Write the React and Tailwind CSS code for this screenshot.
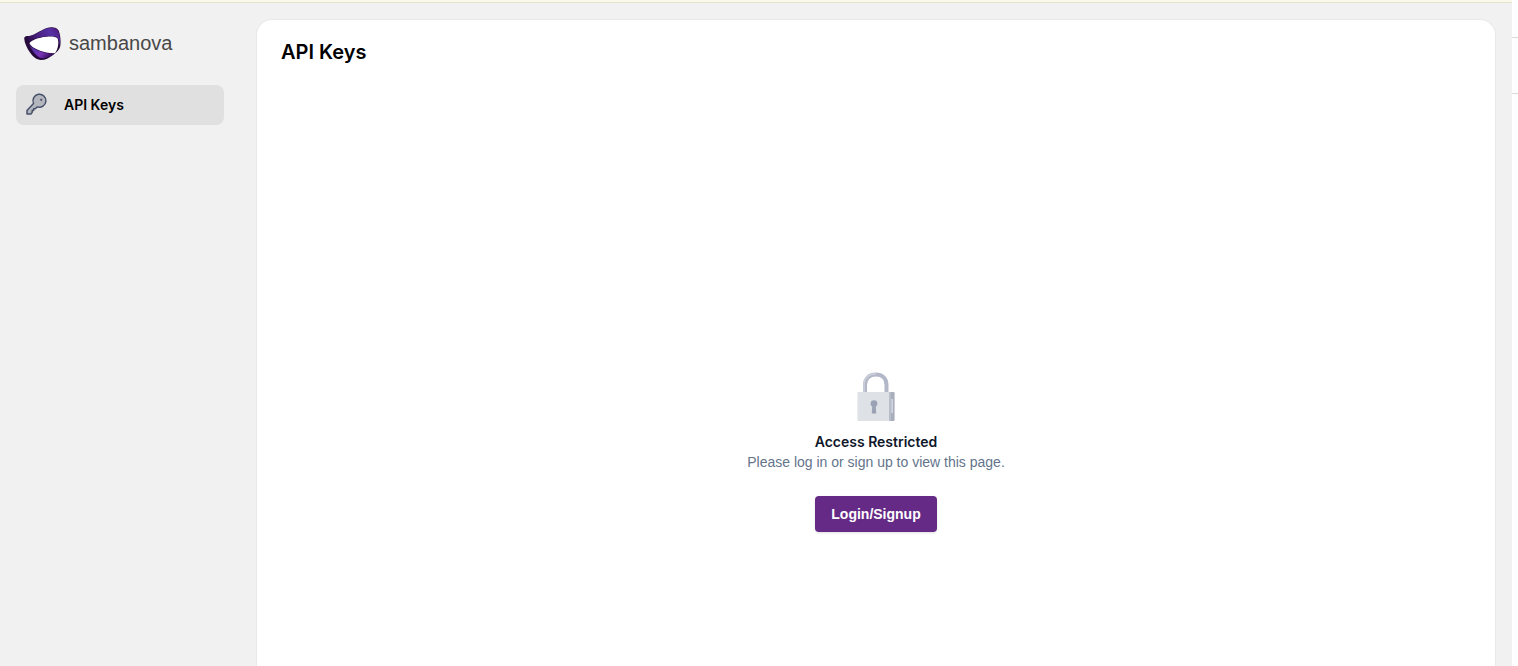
function LogoMark() {
  return (
    <svg viewBox="0 0 37 34" className="w-[37px] h-[34px] shrink-0" aria-hidden="true">
      <defs>
        <linearGradient id="ringTop" x1="0" y1="0.7" x2="1" y2="0.2">
          <stop offset="0" stopColor="#2a0a45" />
          <stop offset="0.4" stopColor="#4b2285" />
          <stop offset="0.75" stopColor="#5531a5" />
          <stop offset="1" stopColor="#521c80" />
        </linearGradient>
        <linearGradient id="ringBottom" x1="0" y1="0" x2="1" y2="0.5">
          <stop offset="0" stopColor="#4a2080" />
          <stop offset="0.35" stopColor="#5d35b0" />
          <stop offset="0.65" stopColor="#7a35b8" />
          <stop offset="1" stopColor="#3a1060" />
        </linearGradient>
      </defs>
      <path
        fill="#260a3c"
        d="M0.2 11.5C0.2 9.5 2 9 4.5 9C10 8.4 16 3.6 22 1.2C27 -0.5 32.5 -0.3 34.6 3.5C36.6 8 37 15 36.2 19.5C35.6 22.6 32.5 25.4 29 28C25 31 21.5 33 17 33C12.5 33 9 30 6 25.6C3 21.3 0.4 16 0.2 11.5Z"
      />
      <path
        fill="#fff"
        d="M5.4 16.2C6.6 19.2 10.4 21.4 15 23.3C20 25.3 26.5 26.7 31 26.3C34.2 22 35 15.5 33.6 11.6C31.5 9.3 27 9.3 22 9.8C14.5 10.6 7.5 13 5.4 16.2Z"
      />
      <path
        fill="url(#ringTop)"
        d="M3 9.7C10 9.3 16 4.4 22 1.8C27 0.1 32 0.2 34 3.8C35.8 7.6 36.5 14 35.6 19C35.7 15 34.8 11.2 32.5 9.8C29.5 8.8 26 9 21.5 9.5C14.5 10.2 8.5 11.9 5.4 14.6C4.2 13.4 3.2 11.5 3 9.7Z"
      />
      <path
        fill="url(#ringBottom)"
        d="M5 17.2C7.6 20.4 11 22.2 15.5 24C20.5 26 26.5 27.2 30.6 26.6C26.5 29.6 22 31.6 17.5 31.2C12.5 29.6 7.8 23.5 5 17.2Z"
      />
    </svg>
  )
}

function KeyIcon() {
  return (
    <svg viewBox="0 0 24 24" className="w-6 h-6 shrink-0" aria-hidden="true">
      <path
        fill="#b3b6bd"
        stroke="#47506a"
        strokeWidth="1.5"
        strokeLinejoin="round"
        d="M9.5 10.4A6.5 6.5 0 1 1 13.3 13.9L11.2 15.8H9.6V17.6H8.2V19.4L6.9 21H3V17.4Z"
      />
      <circle cx="17.2" cy="6.8" r="1.1" fill="#47506a" />
    </svg>
  )
}

function LockIcon() {
  return (
    <svg viewBox="0 0 38 50" className="w-[38px] h-[50px]" aria-hidden="true">
      <path fill="none" stroke="#b3b8c9" strokeWidth="4" d="M8 21V13C8 6.4 12.6 2.5 18.8 2.5S29.5 6.4 29.5 13V21" />
      <path fill="none" stroke="#cdd1db" strokeWidth="1.5" d="M7 21V13C7 6 12 1.7 18.8 1.7" />
      <path fill="#a9aebd" d="M32 20H36.4Q37.6 20 37.6 21.2V47.8Q37.6 49 36.4 49H32Z" />
      <path fill="#dee1e6" d="M1.6 20H32.6V49H1.6Q0.4 49 0.4 47.8V21.2Q0.4 20 1.6 20Z" />
      <path fill="#b8bdcb" d="M32 20H34V49H32Z" />
      <path fill="#d2d5de" d="M34.3 27H36V41H34.3Z" />
      <circle cx="17" cy="31.6" r="3.4" fill="#9ba2b5" />
      <path fill="#9ba2b5" d="M15.4 32H18.6L19.2 41.5H14.8Z" />
    </svg>
  )
}

function Sidebar() {
  return (
    <aside className="w-60 shrink-0 px-4 pt-6">
      <a href="#" className="flex items-start gap-2 pl-2 h-[34px]">
        <LogoMark />
        <span className="text-xl leading-8 text-[#484848]">sambanova</span>
      </a>
      <nav className="mt-6">
        <a href="#keys" className="flex items-center gap-4 h-10 px-2 rounded-lg bg-[#e0e0e0]">
          <KeyIcon />
          <span className="font-['Inter',sans-serif] text-sm font-semibold text-black">API Keys</span>
        </a>
      </nav>
    </aside>
  )
}

function AccessRestricted() {
  return (
    <section className="flex-1 flex flex-col items-center justify-center pt-[170px]">
      <LockIcon />
      <h2 className="mt-2.5 font-['Inter',sans-serif] text-sm leading-5 font-semibold text-[#0f172a]">Access Restricted</h2>
      <p className="text-sm leading-5 text-[#64748b]">Please log in or sign up to view this page.</p>
      <button className="mt-6 h-9 px-4 rounded bg-[#642a86] text-white text-sm font-bold shadow-sm">Login/Signup</button>
    </section>
  )
}

function App() {
  return (
    <div className="min-h-screen flex bg-white font-['Liberation_Sans',Arial,sans-serif]">
      <div className="flex-1 flex flex-col bg-[#f1f1f1]">
        <div className="h-[3px] bg-[#f9faec] border-b border-[#e2e4cc]" />
        <div className="flex-1 flex">
          <Sidebar />
          <main className="flex-1 flex flex-col mt-4 mx-4 px-6 pt-4 rounded-t-2xl border border-b-0 border-[#e9e9ec] bg-white">
            <h1 className="font-['Inter',sans-serif] text-xl leading-8 font-semibold text-black">API Keys</h1>
            <AccessRestricted />
          </main>
        </div>
      </div>
      <div className="w-1.5 shrink-0 pt-[37px]">
        <div className="h-[57px] border-y border-[#d9d9dc]" />
      </div>
    </div>
  )
}

export default App
